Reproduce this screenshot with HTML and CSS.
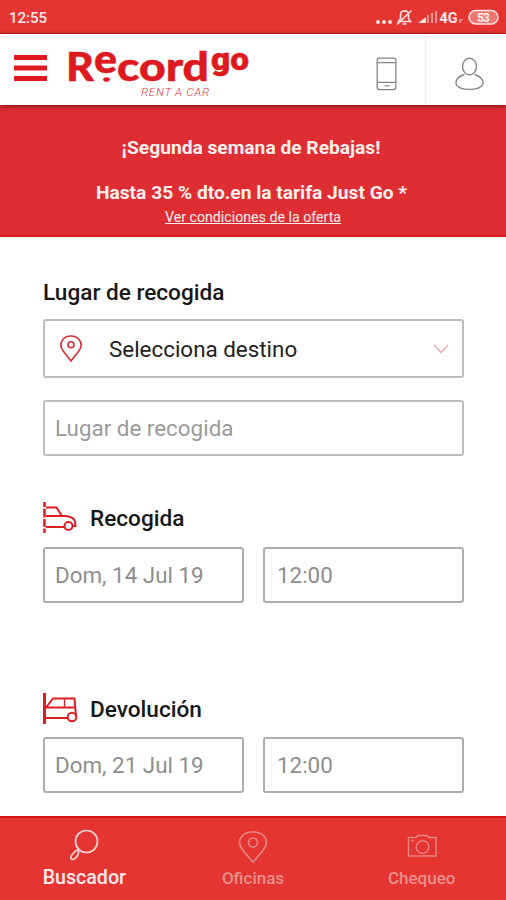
FILE: index.html
```html
<!DOCTYPE html>
<html lang="es">
<head>
<meta charset="utf-8">
<title>Record go</title>
<link rel="stylesheet" href="styles.css">
</head>
<body>
<div class="status">
  <span class="clock">12:55</span>
  <svg class="indicators" width="130" height="34" viewBox="0 0 130 34">
    <g fill="#ffe9e7"><circle cx="2" cy="22" r="1.9"/><circle cx="8" cy="22" r="1.9"/><circle cx="14" cy="22" r="1.9"/></g>
    <g fill="none" stroke="#ffe1df" stroke-width="1.600"><path d="M22.500 21.500H34.500L32.500 18.500V15C32.500 9.500 24.500 9.500 24.500 15V18.500ZM26.500 24H30.500M21 24.500L35.500 10.500"/></g>
    <path d="M42 23L50 17V23Z" fill="#ffe5e3"/>
    <g fill="#f09390"><rect x="51" y="15" width="2" height="8"/><rect x="55" y="13" width="2" height="10"/><rect x="59" y="11" width="2" height="12"/><path d="M83 19h4v1.500h-2V23h-2z"/></g>
    <text class="net" x="63.500" y="23" textLength="18" lengthAdjust="spacingAndGlyphs">4G</text>
    <rect x="93" y="10.500" width="29" height="13.500" rx="6.700" fill="#ee7773" stroke="#ffe4e2" stroke-width="1.500"/>
    <text class="battery" x="101" y="21.700" textLength="13">53</text>
  </svg>
</div>
<header class="header">
  <svg class="menu" width="33" height="27" viewBox="0 0 33 27" fill="#dd1a20"><rect y="0" width="33" height="5"/><rect y="10.500" width="33" height="5"/><rect y="21" width="33" height="5"/></svg>
  <svg class="logo" width="184" height="70" viewBox="0 0 184 70">
    <g class="brand">
      <text x="-1" y="47" font-size="40" textLength="28" lengthAdjust="spacingAndGlyphs">R</text>
      <text x="27" y="39" font-size="39" textLength="23" lengthAdjust="spacingAndGlyphs">e</text>
      <text x="50" y="47" font-size="40" textLength="92" lengthAdjust="spacingAndGlyphs">cord</text>
      <text class="go" x="144" y="36" font-size="32" textLength="38" lengthAdjust="spacingAndGlyphs">go</text>
    </g>
    <ellipse cx="39.500" cy="45.500" rx="3.300" ry="2.200" fill="#dd1a20"/>
    <text class="tagline" x="74" y="62" textLength="68">RENT A CAR</text>
  </svg>
  <div class="actions">
    <svg class="phone" width="76" height="70" viewBox="0 0 76 70" fill="none" stroke="#858585" stroke-width="1.300"><rect x="27.500" y="24" width="19" height="32" rx="2.500"/><path d="M27.500 28.500h19M27.500 48.500h19M35 52h5"/></svg>
    <svg class="user" width="80" height="70" viewBox="0 0 80 70" fill="none" stroke="#858585" stroke-width="1.400"><ellipse cx="43.500" cy="32.500" rx="7" ry="8.300"/><path d="M38.500 40.500C33.500 42 30 45 30 49C30 57.500 57 57.500 57 49C57 45 53.500 42 48.500 40.500"/></svg>
  </div>
</header>
<section class="promo">
  <p class="promo-title">¡Segunda semana de Rebajas!</p>
  <p class="promo-sub">Hasta 35 % dto.en la tarifa Just Go *</p>
  <a class="promo-link">Ver condiciones de la oferta</a>
</section>
<main class="form">
  <h2 class="label">Lugar de recogida</h2>
  <div class="box select">
    <svg width="22" height="28" viewBox="0 0 22 28" fill="none" stroke="#dc2a30" stroke-width="1.600"><path d="M11 26L3.500 16.500C-3 8 4 1 11 1S25 8 18.500 16.500Z"/><circle cx="11" cy="9.800" r="3"/></svg>
    <span class="select-text">Selecciona destino</span>
    <svg class="chevron" width="16" height="10" viewBox="0 0 16 10" fill="none" stroke="#f2a0a8" stroke-width="1.200"><path d="M1 1L8 8.500L15 1"/></svg>
  </div>
  <div class="box place">Lugar de recogida</div>
  <h2 class="label trip pickup">
    <svg width="35" height="32" viewBox="0 0 35 32" fill="none" stroke="#dc1e24" stroke-width="2"><path stroke-width="2.500" stroke-dasharray="5 1.500 9 1.500 8 1.500" d="M1.500 0V31"/><path d="M3 5.500H13.500L19 14M3 14H23C30 15 32.500 17 32.500 24H29M3 25H21"/><circle cx="25.500" cy="24" r="4"/></svg>
    <span>Recogida</span>
  </h2>
  <div class="row">
    <div class="box">Dom, 14 Jul 19</div>
    <div class="box time">12:00</div>
  </div>
  <h2 class="label trip return">
    <svg width="35" height="32" viewBox="0 0 35 32" fill="none" stroke="#dc1e24" stroke-width="2"><path stroke-width="3" d="M1.500 0V31"/><path d="M3 14.500L10 5.500H31.500L33 23M3 14.500H32M3 25H25"/><path stroke-width="1.300" d="M21.500 6V14"/><circle cx="29" cy="24" r="4.300"/></svg>
    <span>Devolución</span>
  </h2>
  <div class="row">
    <div class="box">Dom, 21 Jul 19</div>
    <div class="box time">12:00</div>
  </div>
</main>
<nav class="tabs">
  <div class="tab active">
    <svg width="32" height="34" viewBox="0 0 32 34" fill="none" stroke="#ffd6d3" stroke-width="1.700"><circle cx="18.500" cy="13.500" r="11"/><path d="M10.500 21.500C8 22 4 26 3 28.500C2 31.500 5.500 32 7 30.500C9 29 11 25.500 10.500 21.500Z"/></svg>
    <span>Buscador</span>
  </div>
  <div class="tab">
    <svg width="32" height="34" viewBox="0 0 32 34" fill="none" stroke="#e48380" stroke-width="1.700"><path d="M16 33L6.500 22C-3 10 7 3 16 3S35 10 25.500 22Z"/><circle cx="16" cy="13.500" r="4.500"/></svg>
    <span>Oficinas</span>
  </div>
  <div class="tab">
    <svg width="32" height="34" viewBox="0 0 32 34" fill="none" stroke="#e48380" stroke-width="1.500"><path d="M2.500 8.500H10L12 6.500H21L23 8.500H30V27H2.500Z"/><circle cx="16.500" cy="18" r="6.300"/><path d="M5 11.500h3"/></svg>
    <span>Chequeo</span>
  </div>
</nav>
</body>
</html>
```
FILE: styles.css
```css
* { box-sizing: border-box; }
body {
  margin: 0;
  width: 506px;
  height: 900px;
  display: flex;
  flex-direction: column;
  overflow: hidden;
  background: #fff;
  font-family: Roboto, sans-serif;
}
.status {
  flex: none;
  height: 34px;
  display: flex;
  align-items: center;
  justify-content: space-between;
  padding: 0 0 0 9px;
  background: #e43532;
  border-bottom: 1px solid #d51f20;
}
.clock { color: #ffecea; font-size: 15px; font-weight: 500; line-height: 20px; padding-top: 3px; }
.net { font-size: 14.500px; font-weight: 700; fill: #ffe9e7; }
.battery { font-size: 12px; font-weight: 700; fill: #fff2f0; }
.header {
  flex: none;
  height: 71px;
  display: flex;
  align-items: flex-start;
  padding-left: 14px;
  background: #fff;
  box-shadow: 0 1px 5px rgba(60, 0, 0, .65);
  z-index: 1;
}
.menu { margin-top: 21px; }
.logo { margin-left: 20px; }
.brand { font-family: Lato, sans-serif; font-weight: 900; fill: #dd1a20; stroke: #dd1a20; stroke-width: .5px; }
.go { font-family: Roboto, sans-serif; }
.tagline { font-size: 11.500px; font-style: italic; font-weight: 300; fill: #dd3439; }
.actions { display: flex; margin-left: auto; }
.phone { border-right: 1px solid #eee; }
.promo {
  flex: none;
  height: 132px;
  padding-top: 31px;
  text-align: center;
  color: #ffefed;
  background: #de2e34;
  border-bottom: 2px solid #d91b20;
}
.promo p { margin: 0; font-weight: 700; }
.promo-title { font-size: 19.200px; line-height: 24px; padding-right: 4px; }
.promo .promo-sub { font-size: 19.200px; line-height: 24px; margin-top: 21px; padding-right: 3px; }
.promo-link { display: block; font-size: 14.200px; line-height: 18px; margin-top: 3px; text-decoration: underline; }
.form { flex: 1; padding: 40px 42px 0 43px; }
.label { margin: 0; font-size: 22.600px; font-weight: 500; line-height: 32px; color: #171717; }
.box {
  height: 56px;
  display: flex;
  align-items: center;
  padding-left: 10px;
  border: 2px solid #bdbdbd;
  border-radius: 3px;
  font-size: 22.400px;
  color: #8e8e8e;
}
.select { height: 59px; margin-top: 10px; padding: 0 13px 0 15px; color: #222; }
.select svg { flex: none; }
.select-text { margin-left: 27px; }
.select .chevron { margin-left: auto; }
.place { margin-top: 22px; color: #9a9a9a; }
.trip { display: flex; gap: 12px; }
.trip span { padding-top: 1px; }
.pickup { height: 32px; margin-top: 46px; }
.return { height: 32px; margin-top: 90px; }
.row { display: grid; grid-template-columns: 201px 201px; justify-content: space-between; margin-top: 12px; }
.row .box { border-color: #adadad; }
.row .time { padding-left: 12px; }
.pickup + .row { margin-top: 13px; }
.tabs {
  flex: none;
  height: 84px;
  display: grid;
  grid-template-columns: repeat(3, 1fr);
  background: #e43532;
  border-top: 2px solid #d31317;
}
.tab {
  display: flex;
  flex-direction: column;
  align-items: center;
  padding-top: 11px;
  color: #e88f8b;
  font-size: 17px;
  font-weight: 500;
  line-height: 24px;
}
.tab span { margin-top: 3px; }
.active { padding-top: 10px; color: #ffebe9; font-size: 19.600px; }
.active span { margin-top: 4px; }
```
